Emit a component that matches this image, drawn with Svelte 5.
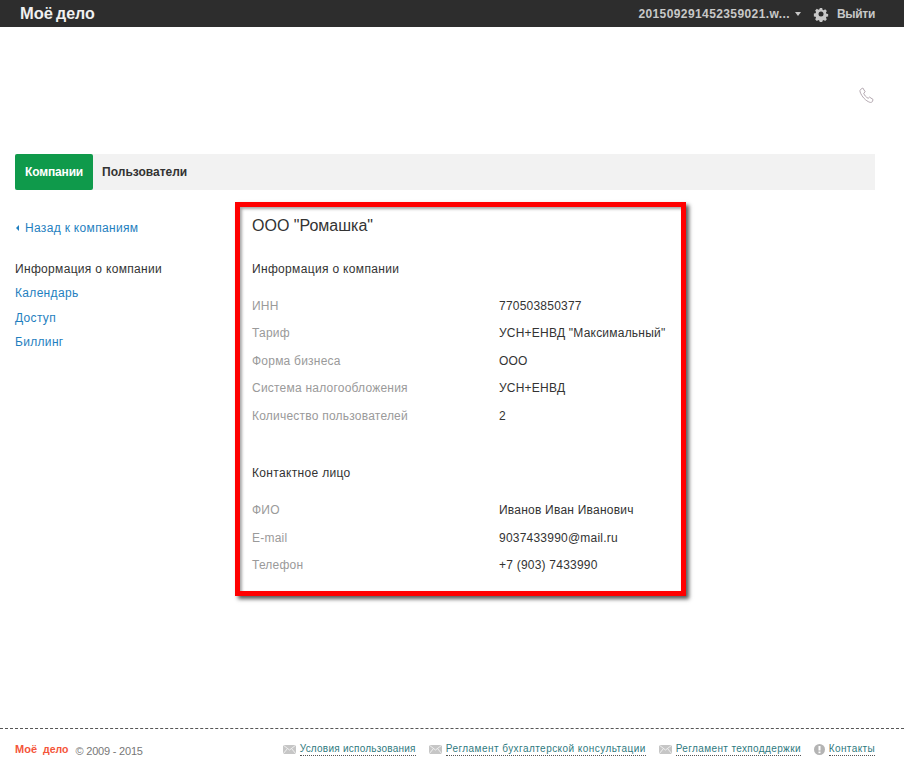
<script>
  const info = [
    ['ИНН', '770503850377'],
    ['Тариф', 'УСН+ЕНВД "Максимальный"'],
    ['Форма бизнеса', 'ООО'],
    ['Система налогообложения', 'УСН+ЕНВД'],
    ['Количество пользователей', '2']
  ];
  const contact = [
    ['ФИО', 'Иванов Иван Иванович'],
    ['E-mail', '9037433990@mail.ru'],
    ['Телефон', '+7 (903) 7433990']
  ];
  const links = [
    ['mail', 'Условия использования'],
    ['mail', 'Регламент бухгалтерской консультации'],
    ['mail', 'Регламент техподдержки'],
    ['info', 'Контакты']
  ];
</script>

<div class="page">
  <header class="topbar">
    <div class="logo"><span class="word">Моё</span><span class="word second-word">дело</span></div>
    <div class="user">
      <span class="account">201509291452359021.w...</span>
      <span class="caret"></span>
      <svg class="gear" width="16" height="16" viewBox="0 0 16 16">
        <path fill="#c8c8c8" d="M6.600 1h2.800l.4 2 1.300.6 1.800-1.100 2 2-1.100 1.800.6 1.300 2 .4v2.800l-2 .4-.6 1.300 1.100 1.800-2 2-1.800-1.100-1.300.6-.4 2H6.600l-.4-2-1.300-.6-1.800 1.100-2-2 1.100-1.800-.6-1.300-2-.4V7.400l2-.4.6-1.300-1.100-1.800 2-2 1.800 1.100 1.300-.6z" transform="translate(1.200 1.200) scale(.85)"/>
        <circle cx="8" cy="8" r="2.500" fill="#2d2d2d"/>
      </svg>
      <span class="logout">Выйти</span>
    </div>
  </header>

  <div class="phone-row">
    <svg width="16" height="17" viewBox="0 0 16 17" fill="none">
      <path d="M1.500 2.500 3.800 1l2.400 3.800-1.500 1.400c.8 2.300 2.300 4 4.500 5.100l1.300-1.200 3.500 2.300-.4 1.800c-.4 1-1.700 1.500-2.800 1.100C6.800 13.900 2.900 9.800 1.100 5c-.3-1-.2-1.900.4-2.500z" stroke="#b3a8b0" stroke-width="1"/>
    </svg>
  </div>

  <nav class="tabs">
    <span class="tab active">Компании</span>
    <span class="tab">Пользователи</span>
  </nav>

  <main class="content">
    <aside class="side">
      <div class="back"><span class="tri"></span><span class="link">Назад к компаниям</span></div>
      <ul>
        <li class="current">Информация о компании</li>
        <li class="link">Календарь</li>
        <li class="link">Доступ</li>
        <li class="link">Биллинг</li>
      </ul>
    </aside>

    <section class="panel">
      <h1>ООО "Ромашка"</h1>
      <h2>Информация о компании</h2>
      <div class="rows first-rows">
        {#each info as [k, v]}
          <div class="row"><span class="key">{k}</span><span class="val">{v}</span></div>
        {/each}
      </div>
      <h2 class="second">Контактное лицо</h2>
      <div class="rows">
        {#each contact as [k, v]}
          <div class="row"><span class="key">{k}</span><span class="val">{v}</span></div>
        {/each}
      </div>
    </section>
  </main>

  <footer class="footer">
    <div class="copy">
      <div class="logo red"><span class="word">Моё</span><span class="word second-word">дело</span></div>
      <span class="years">© 2009 - 2015</span>
    </div>
    <div class="flinks">
      {#each links as [icon, label]}
        <div class="flink">
          {#if icon === 'mail'}
            <svg width="13" height="9" viewBox="0 0 13 9">
              <rect width="13" height="9" fill="#c6c6c6"/>
              <path d="M0 0l6.500 5L13 0M0 9l4.500-5.500M13 9 8.500 3.500" stroke="#efefef" fill="none"/>
            </svg>
          {:else}
            <svg width="11" height="11" viewBox="0 0 11 11">
              <circle cx="5.500" cy="5.500" r="5.500" fill="#b4b4b4"/>
              <rect x="4.500" y="2" width="2" height="4.500" fill="#fff"/>
              <rect x="4.500" y="7.500" width="2" height="1.700" fill="#fff"/>
            </svg>
          {/if}
          <span class="flabel">{label}</span>
        </div>
      {/each}
    </div>
  </footer>
</div>

<style>
  :global(body) {
    margin: 0;
    background: #fff;
  }
  .page {
    height: 773px;
    display: flex;
    flex-direction: column;
    font-family: "Liberation Sans", Arial, sans-serif;
    font-size: 12px;
    color: #333;
    letter-spacing: 0.22px;
    overflow: hidden;
  }
  .topbar {
    height: 27px;
    flex: none;
    background: #2d2d2d;
    display: flex;
    align-items: center;
    justify-content: space-between;
    padding: 0 29px 0 20px;
  }
  .logo {
    display: flex;
    align-items: baseline;
    font-size: 16.500px;
    font-weight: 700;
    color: #f0f0f0;
    letter-spacing: 0;
    white-space: nowrap;
    line-height: 1;
  }
  .second-word {
    margin-left: 3px;
    font-size: 16px;
  }
  .logo.red {
    color: #f4553a;
    font-size: 11px;
    margin-top: 2px;
  }
  .logo.red .second-word {
    margin-left: 6px;
    font-size: 10.500px;
  }
  .user {
    display: flex;
    align-items: center;
    color: #c8c8c8;
    font-weight: 700;
    font-size: 12px;
    letter-spacing: 0.400px;
  }
  .caret {
    width: 0;
    height: 0;
    border: 3px solid transparent;
    border-top: 4px solid #c8c8c8;
    border-bottom: 0;
    margin: 1px 0 0 5px;
  }
  .gear { margin-left: 12px; }
  .logout {
    margin-left: 8px;
    letter-spacing: -0.300px;
  }
  .phone-row {
    height: 127px;
    flex: none;
    box-sizing: border-box;
    display: flex;
    justify-content: flex-end;
    padding: 60px 29px 0 0;
  }
  .tabs {
    margin: 0 29px 0 15px;
    height: 36px;
    flex: none;
    background: #f2f2f2;
    display: flex;
    align-items: stretch;
    font-weight: 700;
    letter-spacing: 0;
  }
  .tab {
    display: flex;
    align-items: center;
    padding: 0 9px;
  }
  .tab.active {
    background: #0f9a4b;
    color: #fff;
    border-radius: 2px;
    padding: 0 10px;
    letter-spacing: -0.150px;
  }
  .content {
    display: flex;
    flex: none;
    padding: 12px 0 0 15px;
  }
  .side {
    width: 220px;
    flex: none;
    padding-top: 19px;
    letter-spacing: 0.320px;
  }
  .link { color: #1f7fc0; }
  .back {
    display: flex;
    align-items: center;
    height: 14px;
  }
  .tri {
    width: 0;
    height: 0;
    border: 3px solid transparent;
    border-right: 3px solid #1f7fc0;
    border-left: 0;
    margin: 0 6px 0 1px;
  }
  ul {
    list-style: none;
    margin: 22px 0 0;
    padding: 0;
  }
  li {
    height: 24.300px;
    line-height: 24px;
  }
  .panel {
    width: 451px;
    height: 394px;
    flex: none;
    box-sizing: border-box;
    border: 5px solid #f00;
    box-shadow: 3px 3px 4px rgba(0, 0, 0, 0.65), inset 2px 2px 3px rgba(0, 0, 0, 0.35);
    padding: 9px 12px 0;
  }
  h1 {
    margin: 0;
    font-size: 16px;
    font-weight: 400;
    line-height: 20px;
    letter-spacing: 0;
    color: #333;
  }
  h2 {
    margin: 25px 0 0;
    font-size: 12px;
    font-weight: 400;
    line-height: 16px;
    letter-spacing: 0.330px;
    color: #333;
  }
  h2.second {
    margin-top: 34.250px;
  }
  .rows {
    margin-top: 16.500px;
  }
  .rows.first-rows {
    margin-top: 15.750px;
  }
  .row {
    display: flex;
    height: 27.500px;
    line-height: 27.500px;
  }
  .key {
    width: 247px;
    flex: none;
    color: #9a9a9a;
  }
  .val {
    color: #333;
    white-space: nowrap;
  }
  .footer {
    margin: auto 0 0;
    height: 45px;
    flex: none;
    box-sizing: border-box;
    border-top: 1px dashed #555;
    display: flex;
    justify-content: space-between;
    padding: 13px 29px 0 15px;
  }
  .copy {
    display: flex;
    align-items: flex-start;
    gap: 7px;
  }
  .years {
    font-size: 11px;
    line-height: 13px;
    color: #777;
    letter-spacing: -0.200px;
    margin-top: 3px;
  }
  .flinks {
    display: flex;
    gap: 13px;
    font-size: 10px;
    height: 14px;
  }
  .flink {
    display: flex;
    align-items: center;
    gap: 4px;
  }
  .flabel {
    color: #2f7a80;
    letter-spacing: 0.370px;
    line-height: 13px;
    border-bottom: 1px dotted #555;
    white-space: nowrap;
  }
  .flink:nth-child(1) .flabel { letter-spacing: 0.240px; }
  .flink:nth-child(2) .flabel { letter-spacing: 0.450px; }
</style>
